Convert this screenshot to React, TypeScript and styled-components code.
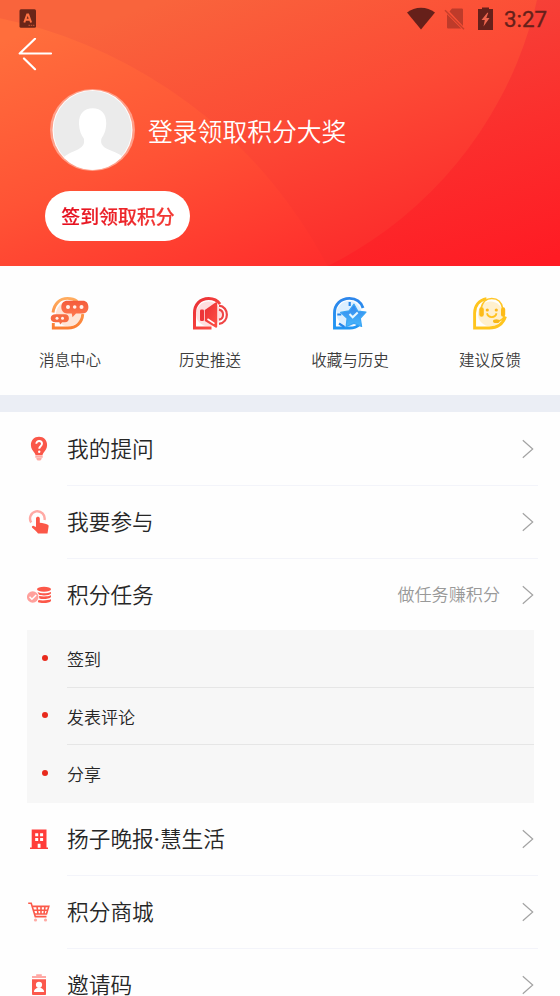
import React from "react";
import styled, { createGlobalStyle } from "styled-components";

const GlobalStyle = createGlobalStyle`
  * { box-sizing: border-box; }
  html, body { margin: 0; padding: 0; background: #fefefe; }
  body {
    font-family: "Noto Sans CJK SC", "Noto Sans", sans-serif;
    font-weight: 350;
    overflow: hidden;
  }
`;

const Screen = styled.div`
  width: 560px;
  height: 996px;
  overflow: hidden;
  background: #fefefe;
`;

const Header = styled.header`
  position: relative;
  height: 266px;
  overflow: hidden;
  background: #fc4b34;
`;

const Backdrop = styled.svg`
  position: absolute;
  inset: 0;
`;

const HeaderContent = styled.div`
  position: relative;
  display: flex;
  flex-direction: column;
  align-items: flex-start;
`;

const StatusBar = styled.div`
  display: flex;
  width: 100%;
  height: 38px;
  justify-content: space-between;
  align-items: flex-start;
  padding: 7px 12px 0 19px;
`;

const StatusIcons = styled.div`
  display: flex;
  align-items: flex-start;
`;

const StatusGlyph = styled.svg<{ $gap?: number }>`
  display: block;
  margin-right: ${(p) => p.$gap ?? 0}px;
`;

const Clock = styled.span`
  width: 44px;
  font: 400 22.3px/25px Roboto, sans-serif;
  color: #66201a;
  -webkit-text-stroke: 0.35px #66201a;
  white-space: nowrap;
`;

const BackButton = styled.button`
  display: block;
  margin-left: 18px;
  padding: 0;
  border: 0;
  background: none;
  height: 33px;
`;

const Profile = styled.div`
  display: flex;
  align-items: center;
  margin: 18px 0 0 50px;
  gap: 13px;
  height: 82px;
`;

const LoginPrompt = styled.span`
  font-size: 24.8px;
  line-height: 36px;
  color: #fff;
  white-space: nowrap;
`;

const SignInButton = styled.button`
  width: 145px;
  height: 50px;
  margin: 20px 0 0 45px;
  padding: 0 0 1px 1px;
  border: 0;
  border-radius: 25px;
  background: #fff;
  font: 500 18.9px/49px "Noto Sans CJK SC", sans-serif;
  white-space: nowrap;
`;

const SignInLabel = styled.span`
  background: linear-gradient(90deg, #e50b1c, #f33a34);
  background-clip: text;
  -webkit-background-clip: text;
  color: transparent;
  -webkit-text-stroke: 0.2px transparent;
`;

const Shortcuts = styled.nav`
  display: grid;
  grid-template-columns: repeat(4, 1fr);
  height: 129px;
  padding-top: 29px;
`;

const Shortcut = styled.div`
  display: flex;
  flex-direction: column;
  align-items: center;
`;

const ShortcutLabel = styled.span`
  margin-top: 16px;
  font-size: 15.5px;
  line-height: 24px;
  color: #3c3c3c;
`;

const Divider = styled.div`
  height: 17px;
  background: #ebeef5;
`;

const MenuItem = styled.div<{ $height: number; $shift?: number }>`
  display: grid;
  grid-template-columns: 40px 1fr auto 38px;
  align-items: center;
  height: ${(p) => p.$height}px;
  padding: ${(p) => p.$shift ?? 0}px 0 0 27px;
`;

const MenuIcon = styled.svg`
  display: block;
`;

const MenuTitle = styled.span`
  font-size: 21.7px;
  line-height: 32px;
  padding-bottom: 2px;
  color: #262626;
  white-space: nowrap;
`;

const MiddleDot = styled.span`
  font-family: Roboto, sans-serif;
  font-weight: 500;
  line-height: 0;
`;

const Hint = styled.span`
  grid-column: 3;
  margin-right: 22px;
  padding-bottom: 2px;
  font-size: 17.1px;
  line-height: 26px;
  color: #999;
`;

const Chevron = styled.svg`
  display: block;
  grid-column: 4;
`;

const Rule = styled.div`
  height: 1px;
  margin: 0 22px 0 67px;
  background: #f3f4fa;
`;

const TaskList = styled.ul`
  list-style: none;
  width: 507px;
  height: 173px;
  margin: 0 0 0 27px;
  padding: 0;
  background: #f7f7f7;
`;

const TaskItem = styled.li`
  display: flex;
  height: 57.6px;
  padding-left: 15px;
`;

const Dot = styled.i`
  width: 6px;
  height: 6px;
  margin-top: 24.5px;
  border-radius: 50%;
  background: #e82a1c;
`;

const TaskLabel = styled.span<{ $ruled: boolean }>`
  flex: 1;
  margin-left: 19px;
  font-size: 17px;
  line-height: 58px;
  color: #262626;
  border-bottom: ${(p) => (p.$ruled ? "1.4px solid #e6e6e6" : "0")};
`;

function HeaderBackdrop() {
  return (
    <Backdrop width="560" height="266" viewBox="0 0 560 266">
      <defs>
        <linearGradient id="right" gradientUnits="userSpaceOnUse" x1="470" y1="-10" x2="550" y2="260">
          <stop offset="0" stopColor="#f5453a" />
          <stop offset="0.5" stopColor="#fb2f2d" />
          <stop offset="1" stopColor="#ff1b24" />
        </linearGradient>
        <linearGradient id="mid" gradientUnits="userSpaceOnUse" x1="220" y1="-20" x2="325" y2="275">
          <stop offset="0" stopColor="#f9643c" />
          <stop offset="0.5" stopColor="#fc4a35" />
          <stop offset="1" stopColor="#fc2b2b" />
        </linearGradient>
        <linearGradient id="left" gradientUnits="userSpaceOnUse" x1="30" y1="30" x2="140" y2="330">
          <stop offset="0" stopColor="#ff6e3c" />
          <stop offset="0.5" stopColor="#ff5335" />
          <stop offset="1" stopColor="#ff2e2c" />
        </linearGradient>
      </defs>
      <rect width="560" height="266" fill="url(#right)" />
      <circle cx="150.5" cy="-88.6" r="396.5" fill="url(#mid)" />
      <circle cx="-98.7" cy="488.9" r="481" fill="url(#left)" />
    </Backdrop>
  );
}

function Avatar() {
  return (
    <svg width="85" height="82" viewBox="0 0 85 82">
      <defs>
        <clipPath id="face"><ellipse cx="42.5" cy="41" rx="39.5" ry="39.5" /></clipPath>
      </defs>
      <ellipse cx="42.5" cy="41" rx="42.5" ry="41" fill="#ff9f89" />
      <ellipse cx="42.5" cy="41" rx="40" ry="40" fill="#fff" />
      <ellipse cx="42.5" cy="41" rx="39" ry="39.2" fill="#ebebeb" />
      <path
        clipPath="url(#face)"
        fill="#fff"
        d="M42.7 19.2c9 0 14 6.2 13.5 16-.3 6.500-2.300 10.500-4.700 14.300-.9 3.500-.4 6.200 2.500 8.500 4.500 3.500 12.500 4.500 18.300 9.500L62 82H23L14 68c6-5.300 13.500-6.300 17.500-10 2.500-2.300 3-5 2.300-8.500-2.800-4-4.500-8-4.800-14.300-.5-9.800 4.700-16 13.700-16z"
      />
    </svg>
  );
}

function MessageIcon() {
  return (
    <svg width="40" height="36" viewBox="0 0 40 36">
      <defs>
        <linearGradient id="msg" x2="0" y2="1"><stop stopColor="#ffac5f" /><stop offset="1" stopColor="#fb7d32" /></linearGradient>
        <linearGradient id="bubble" x2="0" y2="1"><stop stopColor="#f45b3b" /><stop offset="1" stopColor="#ff7a50" /></linearGradient>
      </defs>
      <circle cx="18.500" cy="19" r="12.500" fill="#ffe4d5" />
      <path d="M3 17.500C4.200 8.500 10 3.400 17.500 3.400c4 0 7.200 1 9.700 3M32.800 19C32 28 26 33 18 33H3.300V28" fill="none" stroke="url(#msg)" strokeWidth="2.900" />
      <path d="M17 5.700h16c3 0 5.400 2.200 5.400 6.400s-2.400 6.400-5.400 6.400h-7l-3.500 3.800-.8-3.800H17c-3 0-5.700-2.200-5.700-6.400S14 5.700 17 5.700z" fill="url(#bubble)" />
      <path d="M5.500 19.200H15c2.300 0 3.900 1.400 3.900 4.100s-1.600 4-3.900 4h-2.900l-2 2.200-.7-2.200H5.500c-2.700 0-4.800-1.400-4.800-4s2.100-4.100 4.800-4.100z" fill="#f76b41" />
      <g fill="#fff2ec"><circle cx="18" cy="12" r="2" /><circle cx="24.700" cy="12" r="1.800" /><circle cx="31.500" cy="12" r="2" /><circle cx="7" cy="23.300" r="1.500" /><circle cx="12.500" cy="23.300" r="1.500" /></g>
    </svg>
  );
}

function PushIcon() {
  return (
    <svg width="40" height="36" viewBox="0 0 40 36">
      <defs><linearGradient id="horn" x2="1" y2="1"><stop stopColor="#e92f35" /><stop offset="1" stopColor="#ff5145" /></linearGradient></defs>
      <circle cx="18.500" cy="19" r="12.500" fill="#ffdfdf" />
      <path d="M30 9C27.500 5.400 23.500 3.500 18.700 3.500 10 3.500 4.500 9.700 4.500 18v15H21.500" fill="none" stroke="url(#horn)" strokeWidth="3" />
      <rect x="10" y="14.500" width="4" height="11.500" rx="1.200" fill="#ed3438" />
      <path d="M14.800 15 25.500 7.600c1-.6 1.700-.2 1.700.8v23.200c0 1-.8 1.400-1.700.8L14.800 26z" fill="url(#horn)" />
      <path d="m17.500 24 7 4.700" stroke="#fff" strokeWidth="1.600" />
      <path d="M29 14.700c5.300 1 5.300 9 0 10M29 10.700c10.500 1 10.500 17 0 18.200" fill="none" stroke="#ef4545" strokeWidth="2.200" />
    </svg>
  );
}

function FavoriteIcon() {
  return (
    <svg width="40" height="36" viewBox="0 0 40 36">
      <defs>
        <linearGradient id="clock" x2="0" y2="1"><stop stopColor="#2d86eb" /><stop offset="1" stopColor="#2196f3" /></linearGradient>
        <linearGradient id="star" x2="0" y2="1"><stop stopColor="#3384ec" /><stop offset="1" stopColor="#49bafc" /></linearGradient>
      </defs>
      <circle cx="19" cy="18.500" r="12.500" fill="#dcefff" />
      <path d="M33 13C31 7 26 3.400 19.400 3.400 10.700 3.400 4.500 9.700 4.500 18v15h15.300c4 0 7-1 9.500-3.300" fill="none" stroke="url(#clock)" strokeWidth="2.900" />
      <path d="M19.700 7v4M7.300 19.500h4M9 28.500l5.500 3.500" stroke="#2787ea" strokeWidth="2.200" />
      <path d="m24 9.200 3.900 7 8.100.8-5.700 6.300 1.300 8.200-7.800-3.400-7.700 3.700 1-8.400-6.500-6 8.500-1.600z" fill="url(#star)" stroke="#3ba5f4" strokeWidth="1.200" strokeLinejoin="round" />
      <path d="m19.500 19 3.200 3.300 5-4.800" stroke="#e8f8ff" strokeWidth="2" fill="none" />
    </svg>
  );
}

function FeedbackIcon() {
  return (
    <svg width="40" height="36" viewBox="0 0 40 36">
      <circle cx="20.500" cy="19" r="12.500" fill="#fff0ce" />
      <path d="M16.500 3.700C9 5 4.600 11 4.600 18v15h14.600c8.500 0 13.800-4.300 16.300-11.500" fill="none" stroke="#ffc51e" strokeWidth="2.900" />
      <path d="M11 13.500C12.500 6.800 16 3.600 21.800 3.600S31.500 6.800 32.700 13.500" fill="none" stroke="#ffc629" strokeWidth="1.500" />
      <rect x="9.300" y="12.300" width="4.500" height="9.500" rx="2.200" fill="#fdbb18" />
      <rect x="31" y="12.300" width="4.200" height="9.500" rx="2.100" fill="#fdbb18" />
      <path d="M34 21c-1 3.700-3.500 5-7 5.200" fill="none" stroke="#ffc51e" strokeWidth="1.500" />
      <ellipse cx="26.300" cy="26.200" rx="3.300" ry="1.900" fill="#f8b818" />
      <circle cx="17.300" cy="15" r="1.600" fill="#ffb718" /><circle cx="26.300" cy="15" r="1.600" fill="#ffb718" />
      <path d="M17 18.300c1 5 8.500 5 9.500 0" fill="none" stroke="#ffc21e" strokeWidth="1.800" />
    </svg>
  );
}

const bulb = (
  <>
    <path d="M12 .8c4.800 0 8.100 3.500 8.100 8.100 0 3.900-2 5.600-3.700 8.200-.5.800-.8 1.500-1 2.200H8.600c-.2-.7-.5-1.400-1-2.200C5.900 14.500 3.900 12.800 3.900 8.900 3.900 4.300 7.200.8 12 .8z" fill="#fa5749" />
    <path d="M8.300 19.500h7.400v2.200H8.300zM9.300 22h5.400c0 1.700-1 2.600-2.700 2.600S9.300 23.700 9.300 22z" fill="#ffaaa4" />
    <path d="M9.300 7.800C9.300 4 15 4.300 15 7.700c0 2.400-2.800 2.600-2.800 5" fill="none" stroke="#fff" strokeWidth="1.900" />
    <circle cx="12.200" cy="15.700" r="1.200" fill="#fff" />
  </>
);
const tap = (
  <>
    <path d="M4.200 12.500A7.300 7.300 0 1 1 17.500 10" fill="none" stroke="#ffa9a4" strokeWidth="2.400" />
    <path d="M9 8.500c0-2.400 3.800-2.400 3.800 0v4.300c3 .2 6 .8 8 2 .7.400.9.900.8 1.600L20.500 23.500H11C9.800 21.200 7 19.400 5.200 17.700c-.9-.9.200-2.300 1.500-1.800l2.300 1z" fill="#fb5748" />
  </>
);
const coins = (
  <>
    <circle cx="5.700" cy="14" r="5.800" fill="#ffa09c" />
    <path d="m2.500 13.800 2.400 2.500L9.200 12" fill="none" stroke="#fff" strokeWidth="1.500" />
    <ellipse cx="17" cy="6.200" rx="7" ry="2.500" fill="#fc5849" />
    <path d="M10.500 8.900c3 1.700 10 1.700 13.500 0v1.600c-1 2.200-9.500 2.600-12.100 1.100M12 13.100c4 .6 9.500.5 12-.8v1.700c-1.500 2.200-9 2.500-11.600 1.500M11.500 17.100c3.700.6 10 .3 12.500-.8v1.700c-1.500 2.400-10.500 2.700-13.200.9z" fill="#fc5849" />
  </>
);
const building = (
  <>
    <path d="M4.700 2.500h14.800v18H21V22H3v-1.500h1.700z" fill="#ff3d3a" />
    <path d="M8.200 6.300h3v3h-3zm4.900 0h3v3h-3zm-4.900 4.800h3v3h-3zm4.900 0h3v3h-3zM10.700 16.800h2.800v4h-2.800z" fill="#fff" />
  </>
);
const cart = (
  <>
    <path d="M1.200 3.200h3l4.100 13.400h11.200" fill="none" stroke="#fb5949" strokeWidth="1.600" />
    <path d="M5.500 6.400h16.300L19.500 14H7.700M6.500 10.200h14.300M10 6.500l1 7.500M14 6.500V14M18 6.500l-1 7.500" fill="none" stroke="#fb5949" strokeWidth="1.600" />
    <circle cx="8.500" cy="20" r="1.600" fill="#ffaaa4" /><circle cx="18.500" cy="20" r="1.600" fill="#ffaaa4" />
  </>
);
const badge = (
  <>
    <path d="M9.200 1.300h5.600V3H19v2H5V3h4.200z" fill="#ffa8a4" />
    <path d="M5 6.300h14v15c0 .5-.5.700-1 .7H6c-.6 0-1-.2-1-.7z" fill="#fb584c" />
    <circle cx="12" cy="11.800" r="3.100" fill="#fff" />
    <path d="M6.900 19c0-2.500 2-4.200 5.100-4.200s5.100 1.700 5.100 4.200z" fill="#fff" />
  </>
);

const shortcuts = [
  { label: "消息中心", icon: <MessageIcon /> },
  { label: "历史推送", icon: <PushIcon /> },
  { label: "收藏与历史", icon: <FavoriteIcon /> },
  { label: "建议反馈", icon: <FeedbackIcon /> },
];

const tasks = ["签到", "发表评论", "分享"];

interface EntryProps {
  title: React.ReactNode;
  icon: React.ReactNode;
  height?: number;
  shift?: number;
  hint?: string;
}

function Entry({ title, icon, height = 72, shift = 0, hint }: EntryProps) {
  return (
    <MenuItem $height={height} $shift={shift}>
      <MenuIcon width="24" height="25" viewBox="0 0 24 25">{icon}</MenuIcon>
      <MenuTitle>{title}</MenuTitle>
      {hint && <Hint>{hint}</Hint>}
      <Chevron width="12" height="20" viewBox="0 0 12 20">
        <path d="m.8 1.200 9.900 8.800L.8 18.800" fill="none" stroke="#a3a3a3" strokeWidth="1.200" />
      </Chevron>
    </MenuItem>
  );
}

export default function App() {
  return (
    <>
      <GlobalStyle />
      <Screen>
        <Header>
          <HeaderBackdrop />
          <HeaderContent>
            <StatusBar>
              <StatusGlyph width="18" height="22" viewBox="0 0 18 22">
                <rect x=".5" y="2.300" width="16.500" height="18.500" rx="1.500" fill="#6b2518" />
                <path d="m5.300 15.500 2.900-8h1l2.900 8M6.500 12.700h4.400" fill="none" stroke="#ff7243" strokeWidth="2" />
                <path d="M9.500 18.400h6" stroke="#b84e30" strokeWidth="1.200" strokeDasharray="1.500 .7" />
              </StatusGlyph>
              <StatusIcons>
                <StatusGlyph $gap={9} width="28" height="24" viewBox="0 0 28 24">
                  <path d="M0 5.500C8-.8 20-.8 28 5.500L14 22.500z" fill="#66201a" />
                </StatusGlyph>
                <StatusGlyph $gap={13} width="21" height="24" viewBox="0 0 21 24">
                  <path d="M8 1.500h9.500c1 0 1.500.5 1.500 1.500v16L5.500 4.500zM3 7.300 17.200 21.500H4.500C3.500 21.500 3 21 3 20z" fill="#be3b2a" />
                  <path d="m1 3.200 19 19" stroke="#c73f2c" strokeWidth="1.500" />
                </StatusGlyph>
                <StatusGlyph $gap={11} width="15" height="24" viewBox="0 0 15 24">
                  <path d="M4 .5h7V2h4v21H0V2h4z" fill="#66201a" />
                  <path d="M9.300 5.700 3.500 13h3.300l-1.300 6.500L11.500 11H8.300l2-5.300z" fill="#ed654e" />
                </StatusGlyph>
                <Clock>3:27</Clock>
              </StatusIcons>
            </StatusBar>
            <BackButton aria-label="返回">
              <svg width="36" height="33" viewBox="0 0 36 33">
                <path d="M17 .8 1.700 15.500H33M6 20.500l11 10.700" fill="none" stroke="#fff" strokeWidth="2.200" strokeLinecap="round" strokeLinejoin="round" />
              </svg>
            </BackButton>
            <Profile>
              <Avatar />
              <LoginPrompt>登录领取积分大奖</LoginPrompt>
            </Profile>
            <SignInButton><SignInLabel>签到领取积分</SignInLabel></SignInButton>
          </HeaderContent>
        </Header>
        <Shortcuts>
          {shortcuts.map((s) => (
            <Shortcut key={s.label}>
              {s.icon}
              <ShortcutLabel>{s.label}</ShortcutLabel>
            </Shortcut>
          ))}
        </Shortcuts>
        <Divider />
        <Entry title="我的提问" icon={bulb} height={73} />
        <Rule />
        <Entry title="我要参与" icon={tap} />
        <Rule />
        <Entry title="积分任务" icon={coins} height={71} shift={1} hint="做任务赚积分" />
        <TaskList>
          {tasks.map((t, i) => (
            <TaskItem key={t}>
              <Dot />
              <TaskLabel $ruled={i < tasks.length - 1}>{t}</TaskLabel>
            </TaskItem>
          ))}
        </TaskList>
        <Entry title={<>扬子晚报<MiddleDot>·</MiddleDot>慧生活</>} icon={building} />
        <Rule />
        <Entry title="积分商城" icon={cart} />
        <Rule />
        <Entry title="邀请码" icon={badge} />
      </Screen>
    </>
  );
}
